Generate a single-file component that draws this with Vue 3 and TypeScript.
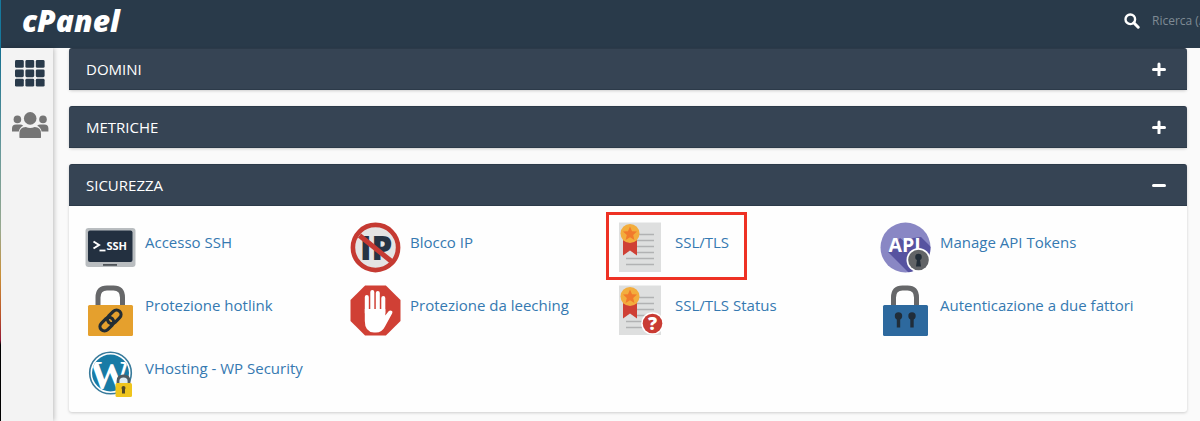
<script setup lang="ts">
import { ref } from 'vue'

interface Feature {
  label: string
  icon: string
  highlighted?: boolean
}

interface Panel {
  title: string
  features: Feature[]
}

const panels: Panel[] = [
  { title: 'DOMINI', features: [] },
  { title: 'METRICHE', features: [] },
  {
    title: 'SICUREZZA',
    features: [
      { label: 'Accesso SSH', icon: 'ssh' },
      { label: 'Blocco IP', icon: 'ip' },
      { label: 'SSL/TLS', icon: 'ssl', highlighted: true },
      { label: 'Manage API Tokens', icon: 'api' },
      { label: 'Protezione hotlink', icon: 'hotlink' },
      { label: 'Protezione da leeching', icon: 'leech' },
      { label: 'SSL/TLS Status', icon: 'ssl-status' },
      { label: 'Autenticazione a due fattori', icon: 'twofactor' },
      { label: 'VHosting - WP Security', icon: 'wordpress' },
    ],
  },
]

const open = ref<string[]>(['SICUREZZA'])
const query = ref('')

function toggle(title: string) {
  open.value = open.value.includes(title)
    ? open.value.filter((t) => t !== title)
    : [...open.value, title]
}
</script>

<template>
  <div class="shell">
    <header class="topbar">
      <a class="brand" href="#">cPanel</a>
      <div class="search">
        <label for="search" aria-label="Ricerca">
          <svg class="search-icon" viewBox="0 0 16 16">
            <circle cx="6.3" cy="6.3" r="4.8" fill="none" stroke="#fff" stroke-width="2.4" />
            <path d="M9.8 9.8 14.2 14.2" stroke="#fff" stroke-width="3" stroke-linecap="round" />
          </svg>
        </label>
        <input id="search" v-model="query" type="text" placeholder="Ricerca (/)" />
      </div>
    </header>

    <div class="layout">
      <nav class="sidebar">
        <a href="#" aria-label="Home">
          <svg class="nav-icon" viewBox="0 0 38 28">
            <g fill="#293a4a">
              <template v-for="row in 3" :key="row">
                <rect v-for="col in 3" :key="col" :x="col * 10.4 - 6.4" :y="row * 9.4 - 8.4" width="8.8" height="7.8" rx="1.4" />
              </template>
            </g>
          </svg>
        </a>
        <a href="#" aria-label="Utenti">
          <svg class="nav-icon" viewBox="0 0 38 28">
            <g fill="#757575">
              <circle cx="6.4" cy="8.4" r="3.8" />
              <circle cx="32" cy="8.4" r="3.8" />
              <path d="M1 20.5v-3q0-4 4-4h4q2 0 3.2 1.2-3.8 2-4.4 5.8z" />
              <path d="M37.4 20.5v-3q0-4-4-4h-4q-2 0-3.2 1.2 3.8 2 4.4 5.8z" />
              <circle cx="19.2" cy="7.4" r="6.3" />
              <path d="M8.4 26.500v-3.800q0-6.700 6.400-6.700 4.400 1.800 8.800 0 6.400 0 6.400 6.700v3.800q-.3.6-1 .6H9.400q-.7 0-1-.6z" />
            </g>
          </svg>
        </a>
      </nav>

      <main class="content">
        <section v-for="panel in panels" :key="panel.title" class="panel">
          <button class="panel-head" type="button" :aria-expanded="open.includes(panel.title)" @click="toggle(panel.title)">
            <span>{{ panel.title }}</span>
            <svg class="toggle-icon" viewBox="0 0 14 14">
              <path d="M1.5 7.500h11" />
              <path v-if="!open.includes(panel.title)" d="M7 2v11" />
            </svg>
          </button>

          <div v-if="open.includes(panel.title) && panel.features.length" class="features">
            <a v-for="item in panel.features" :key="item.label" class="feature" :class="{ highlighted: item.highlighted }" href="#">
              <svg v-if="item.icon === 'ssh'" class="icon" viewBox="0 0 50 50">
                <rect x="0.5" y="6" width="50" height="39" rx="3" fill="#b9bdc0" />
                <rect x="3" y="8.5" width="44.5" height="31.5" rx="2" fill="#233040" />
                <rect x="18" y="42" width="14" height="1.8" fill="#4e5358" />
                <path d="m8.5 19.5 5.500 3.500-5.500 3.500" fill="none" stroke="#fff" stroke-width="2" />
                <path d="M14.500 28.500h6" stroke="#fff" stroke-width="1.8" />
                <text x="21.5" y="27.500" font-size="11" font-weight="700" fill="#fff">SSH</text>
              </svg>

              <svg v-else-if="item.icon === 'ip'" class="icon" viewBox="0 0 50 50">
                <circle cx="25.500" cy="25.500" r="23" fill="#e4e4e4" />
                <text x="10" y="37.500" font-size="33" font-weight="800" fill="#263444">IP</text>
                <circle cx="25.500" cy="25.500" r="22.600" fill="none" stroke="#c53a32" stroke-width="4.600" />
                <path d="M9.500 13.500 41 39" stroke="#c53a32" stroke-width="5" />
              </svg>

              <svg v-else-if="item.icon === 'ssl' || item.icon === 'ssl-status'" class="icon" viewBox="0 0 50 50">
                <rect x="4" y="0.5" width="42" height="49.500" fill="#dedfdf" />
                <path d="M21 12.500h18M21 18.500h18M21 24.500h18M21 30.500h18M11 36.500h28M11 42.500h28" stroke="#b1b2b3" stroke-width="1.500" />
                <path d="M8 17h14v16.500l-7-5-7 5z" fill="#cf4035" />
                <circle cx="15" cy="11.500" r="9.500" fill="#f3ad3d" />
                <path d="m15 4.500 2 4.700 5 .4-3.800 3.300 1.200 5-4.400-2.700-4.400 2.700 1.200-5L8 9.600l5-.4z" fill="#f17a2c" />
                <template v-if="item.icon === 'ssl-status'">
                  <circle cx="37.500" cy="38.500" r="11.300" fill="#fff" />
                  <circle cx="37.500" cy="38.500" r="9.800" fill="#c93b33" />
                  <text x="37.500" y="45" font-size="18" font-weight="800" text-anchor="middle" fill="#fff">?</text>
                </template>
              </svg>

              <svg v-else-if="item.icon === 'api'" class="icon" viewBox="0 0 50 50">
                <defs>
                  <clipPath id="api-disc"><circle cx="25.500" cy="25.500" r="25" /></clipPath>
                </defs>
                <g clip-path="url(#api-disc)">
                  <rect width="51" height="51" fill="#8987c4" />
                  <path d="M8 30 20 16l5 4 8-4 8-1 12 12v25H30z" fill="#5753a0" />
                </g>
                <text x="8.500" y="30" font-size="19.500" font-weight="700" fill="#fff">API</text>
                <circle cx="38.500" cy="38" r="12" fill="#fff" />
                <circle cx="38.500" cy="38" r="10.300" fill="#626467" />
                <circle cx="38.500" cy="35" r="3.300" fill="#222d38" />
                <path d="M37.200 36h2.600l1.200 8.500h-5z" fill="#222d38" />
              </svg>

              <svg v-else-if="item.icon === 'hotlink'" class="icon" viewBox="0 0 50 50">
                <path d="M13 21V12.500Q13 3 22 3h6.500q9 0 9 9.500V21" fill="none" stroke="#666769" stroke-width="5" />
                <rect x="3" y="20" width="45" height="31" rx="1.500" fill="#e5a02d" />
                <g transform="translate(25.500 35.500) rotate(-45)" fill="none" stroke="#232d33" stroke-width="3.200">
                  <rect x="-13" y="-4.500" width="15.500" height="9" rx="4.500" />
                  <rect x="-2.500" y="-4.500" width="15.500" height="9" rx="4.500" />
                </g>
              </svg>

              <svg v-else-if="item.icon === 'leech'" class="icon" viewBox="0 0 50 50">
                <path d="M15.100.5h20.800L50.500 15.100v20.800L35.900 50.500H15.100L.5 35.900V15.100z" fill="#d04035" />
                <path d="M16.800 28V12M22.300 26V7M27.800 26V8M33.300 28V13" stroke="#fff" stroke-width="4" stroke-linecap="round" />
                <path d="M14.800 24h20.500v6.500l3.300-4.200q1.600-1.500 3.400-.2.900.9.100 2.400L35 41.500q-3 6-9 6h-2q-9.200-.5-9.200-11.500z" fill="#fff" />
              </svg>

              <svg v-else-if="item.icon === 'twofactor'" class="icon" viewBox="0 0 50 50">
                <path d="M13.500 21V12.500Q13.500 3 22.500 3h5q9 0 9 9.500V21" fill="none" stroke="#666769" stroke-width="5" />
                <rect x="3" y="20" width="45" height="31" rx="1.500" fill="#2d699e" />
                <g fill="#202d3a">
                  <circle cx="18.500" cy="31" r="3.700" />
                  <circle cx="32" cy="31" r="3.700" />
                  <path d="M16.800 32h3.400v10.500h-3.400zM30.300 32h3.400v10.500h-3.400z" />
                </g>
              </svg>

              <svg v-else class="icon" viewBox="0 0 50 50">
                <defs>
                  <clipPath id="wp-disc"><circle cx="25.500" cy="25" r="18.500" /></clipPath>
                </defs>
                <circle cx="25.500" cy="25" r="20.800" fill="#fff" stroke="#387a9b" stroke-width="1.600" />
                <circle cx="25.500" cy="25" r="18.500" fill="#187ba5" />
                <text class="serif" x="24.500" y="39.500" font-size="41" font-weight="700" text-anchor="middle" fill="#fff" clip-path="url(#wp-disc)">W</text>
                <path d="M33 36.500V33q0-5 5.500-5t5.500 5v3.500" fill="#dcebf2" stroke="#505b61" stroke-width="2.800" />
                <rect x="30.500" y="35" width="16.500" height="14" rx="1.500" fill="#efc51d" />
                <circle cx="38.500" cy="40" r="2" fill="#514825" />
                <path d="M37 40h3v5.500h-3z" fill="#514825" />
              </svg>

              <span class="feature-label">{{ item.label }}</span>
            </a>
          </div>
        </section>
      </main>
    </div>
  </div>
</template>

<style>
body {
  margin: 0;
  overflow: hidden;
}
</style>

<style scoped>
.shell {
  box-sizing: border-box;
  display: flex;
  flex-direction: column;
  min-height: 100vh;
  padding-left: 1px;
  background: linear-gradient(#16789c 0, #16789c 48px, #70a5a6 150px, #a5b69a 230px, #d99b3c 275px, #c95a2c 315px, #a01c3a 340px, #000 345px);
  font-family: "Open Sans", sans-serif;
  font-size: 15px;
  line-height: 20px;
}

.topbar {
  box-sizing: border-box;
  display: flex;
  align-items: center;
  justify-content: space-between;
  height: 48px;
  padding: 0 0 6px 21px;
  background: #293a4a;
}

.brand {
  color: #fff;
  font-size: 30px;
  font-style: italic;
  font-weight: 800;
  line-height: 40px;
  text-decoration: none;
}

.search {
  display: flex;
  align-items: center;
  gap: 12px;
}

.search label,
.search-icon {
  display: block;
  width: 16px;
  height: 16px;
}

.search input {
  width: 48px;
  padding: 0;
  border: 0;
  outline: 0;
  background: transparent;
  color: #fff;
  font: inherit;
  font-size: 12px;
}

.search input::placeholder {
  color: #7f8a94;
  opacity: 1;
}

.layout {
  display: flex;
  flex: 1;
}

.sidebar {
  display: flex;
  flex: none;
  flex-direction: column;
  align-items: center;
  gap: 24px;
  box-sizing: border-box;
  width: 52px;
  padding: 11px 0 0 6px;
  background: #f3f3f3;
  box-shadow: 1px 0 5px rgba(0, 0, 0, 0.25);
  z-index: 1;
}

.nav-icon {
  display: block;
  width: 38px;
  height: 28px;
}

.content {
  display: flex;
  flex: 1;
  flex-direction: column;
  gap: 16px;
  min-width: 0;
  padding: 0 13px 8px 16px;
  background: #fafafa;
}

.panel {
  border-radius: 3px;
  background: #fefefe;
  box-shadow: 0 1px 3px rgba(0, 0, 0, 0.18);
}

.panel-head {
  display: flex;
  align-items: center;
  justify-content: space-between;
  width: 100%;
  height: 42px;
  padding: 0 21px 0 17px;
  border: 1px solid #2c3a49;
  border-width: 1px 0;
  border-radius: 3px 3px 0 0;
  background: #364454;
  color: #fff;
  font: inherit;
  cursor: pointer;
}

.panel-head:hover {
  background: #3c4b5c;
}

.toggle-icon {
  width: 14px;
  height: 14px;
  fill: none;
  stroke: #fff;
  stroke-width: 3;
  stroke-linecap: round;
}

.features {
  display: grid;
  grid-template-columns: repeat(4, 1fr);
  gap: 13px 0;
  padding: 16px 42px 14px 16px;
}

.feature {
  position: relative;
  display: flex;
  gap: 10px;
  color: #3579b1;
  text-decoration: none;
}

.feature:hover .feature-label {
  text-decoration: underline;
}

.feature.highlighted::before {
  content: "";
  position: absolute;
  top: -10px;
  left: -9px;
  box-sizing: border-box;
  width: 141px;
  height: 68px;
  border: 3px solid #ee3124;
}

.icon {
  flex: none;
  width: 50px;
  height: 50px;
  overflow: visible;
}

.icon text {
  font-family: "Open Sans", sans-serif;
}

.icon .serif {
  font-family: "Liberation Serif", serif;
}

.feature-label {
  padding-top: 10px;
}
</style>
